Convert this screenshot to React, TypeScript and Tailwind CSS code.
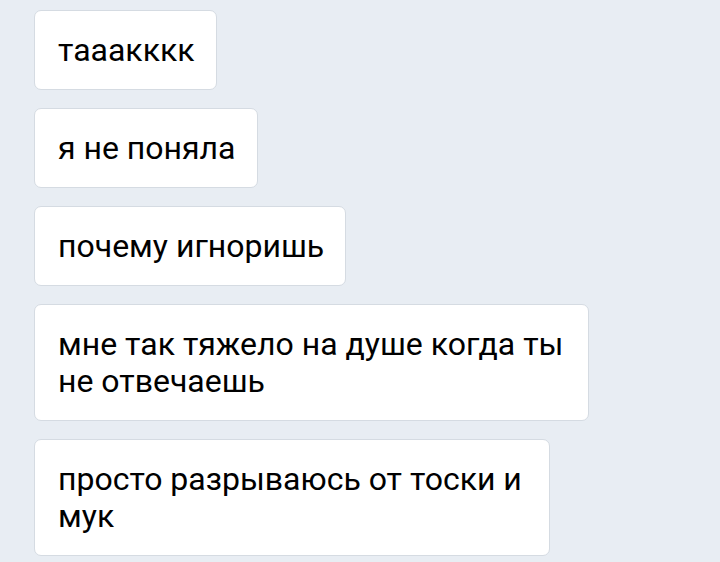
const messages: { text: string; width?: string }[] = [
    { text: "тааакккк" },
    { text: "я не поняла" },
    { text: "почему игноришь" },
    { text: "мне так тяжело на душе когда ты не отвечаешь", width: "w-[555px]" },
    { text: "просто разрываюсь от тоски и мук", width: "w-[516px]" },
];

export default function App() {
    return (
        <div className="w-[720px] h-[562px] overflow-hidden bg-[#e8edf3] font-['Roboto',sans-serif]">
            <div className="flex flex-col items-start gap-[18px] pl-[34px] pt-[10px]">
                {messages.map((m, i) => (
                    <div
                        key={i}
                        className={`${m.width ?? ""} bg-white border border-[#d5dbe2] rounded-[7px] pl-[23px] pr-[21px] pt-[21px] pb-[20px] text-[32px] leading-[37px] text-black`}
                    >
                        {m.text}
                    </div>
                ))}
            </div>
        </div>
    );
}
